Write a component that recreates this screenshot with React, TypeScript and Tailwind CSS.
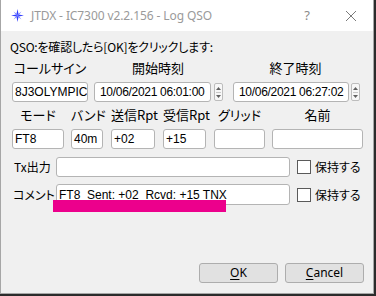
import React from 'react';

const jp = "font-['Noto_Sans_CJK_JP','Noto_Sans',sans-serif] [font-feature-settings:'palt']";

const Field = ({ w, value, className = '' }: { w: string; value?: string; className?: string }) => (
  <div
    className={`${w} h-[20px] shrink-0 bg-white border border-[#b4b4b4] rounded-[3px] flex items-center px-[2px] whitespace-pre overflow-hidden text-[12px] leading-none text-black font-['Liberation_Sans',sans-serif] ${className}`}
  >
    {value}
  </div>
);

const Spinner = ({ className = '' }: { className?: string }) => (
  <div className={`w-[9px] h-[18px] shrink-0 bg-[#f7f7f7] border border-[#bdbdbd] rounded-[2px] flex flex-col items-center justify-center gap-[2px] ${className}`}>
    <svg width="5" height="3" viewBox="0 0 5 3">
      <path d="M0 3 L2.5 0 L5 3 Z" fill="#606060" />
    </svg>
    <div className="w-[5px] h-px bg-[#c8c8c8]" />
    <svg width="5" height="3" viewBox="0 0 5 3">
      <path d="M0 0 L2.5 3 L5 0 Z" fill="#606060" />
    </svg>
  </div>
);

const Label = ({ w, text, className = '' }: { w: string; text: string; className?: string }) => (
  <div className={`${w} shrink-0 text-center whitespace-nowrap text-[13px] leading-[16px] ${className}`}>{text}</div>
);

const Check = () => (
  <div className="w-[14px] h-[14px] shrink-0 bg-white border border-[#5a5a5a] ml-[7px]" />
);

export default function App() {
  return (
    <div className="w-[376px] h-[296px] bg-[#2b2b2b] overflow-hidden">
      <div className={`w-[374px] h-[294px] bg-[#f0f0f0] border border-[#a6a6a6] border-t-0 flex flex-col text-black ${jp}`}>
        {/* title bar */}
        <div className="h-[31px] bg-white flex items-center shrink-0">
          <svg className="ml-[10px]" width="13" height="13" viewBox="0 0 13 13">
            <path d="M6.5 0 L7.6 5.4 L13 6.5 L7.6 7.6 L6.5 13 L5.4 7.6 L0 6.5 L5.4 5.4 Z" fill="#2f3cff" />
            <path d="M2.5 2.5 L6.5 5.6 L10.5 2.5 L7.4 6.5 L10.5 10.5 L6.5 7.4 L2.5 10.5 L5.6 6.5 Z" fill="#6f78ff" />
          </svg>
          <span className="ml-[7px] text-[12px] text-[#9a9a9a] font-['Noto_Sans',sans-serif] tracking-[-0.1px]">
            JTDX - IC7300 v2.2.156 - Log QSO
          </span>
          <span className="ml-auto mr-[35px] text-[13px] text-[#8a8a8a] font-['Noto_Sans',sans-serif]">?</span>
          <svg className="mr-[16px]" width="12" height="12" viewBox="0 0 12 12">
            <path d="M1 1 L11 11 M11 1 L1 11" stroke="#7a7a7a" strokeWidth="1" />
          </svg>
        </div>

        {/* body */}
        <div className="relative flex-1 flex flex-col pl-[11px]">
          <div className="mt-[8px] text-[12px] leading-[16px] -ml-[2px] tracking-[-0.2px]">QSO:を確認したら[OK]をクリックします:</div>

          <div className="mt-[5px] flex">
            <Label w="w-[76px]" text="コールサイン" />
            <Label w="w-[128px]" text="開始時刻" className="ml-[6px]" />
            <Label w="w-[127px]" text="終了時刻" className="ml-[10px]" />
          </div>
          <div className="mt-[6px] flex items-center">
            <Field w="w-[76px]" value="8J3OLYMPIC" className="text-[11px]" />
            <Field w="w-[117px]" value="10/06/2021 06:01:00" className="ml-[6px] pl-[5px] text-[11px] tracking-[-0.3px]" />
            <Spinner className="ml-[3px]" />
            <Field w="w-[116px]" value="10/06/2021 06:27:02" className="ml-[10px] pl-[5px] text-[11px] tracking-[-0.3px]" />
            <Spinner className="ml-[2px]" />
          </div>

          <div className="mt-[5px] flex">
            <Label w="w-[52px]" text="モード" />
            <Label w="w-[32px]" text="バンド" className="ml-[7px]" />
            <Label w="w-[44px]" text="送信Rpt" className="ml-[8px]" />
            <Label w="w-[43px]" text="受信Rpt" className="ml-[8px]" />
            <Label w="w-[51px]" text="グリッド" className="ml-[8px]" />
            <Label w="w-[91px]" text="名前" className="ml-[7px]" />
          </div>
          <div className="mt-[6px] flex">
            <Field w="w-[52px]" value="FT8" />
            <Field w="w-[32px]" value="40m" className="ml-[7px]" />
            <Field w="w-[44px]" value="+02" className="ml-[8px]" />
            <Field w="w-[43px]" value="+15" className="ml-[8px]" />
            <Field w="w-[51px]" className="ml-[8px]" />
            <Field w="w-[91px]" className="ml-[7px]" />
          </div>

          <div className="mt-[8px] flex items-center">
            <div className="w-[44px] text-[12px] leading-[16px] pl-[2px]">Tx出力</div>
            <Field w="w-[234px]" />
            <Check />
            <span className="ml-[4px] text-[12px] leading-[16px]">保持する</span>
          </div>
          <div className="mt-[7px] flex items-center">
            <div className="w-[44px] text-[12px] leading-[16px] pl-[1px]">コメント</div>
            <Field w="w-[234px]" value="FT8  Sent: +02  Rcvd: +15 TNX" className="h-[21px] text-[11px]" />
            <Check />
            <span className="ml-[4px] text-[12px] leading-[16px]">保持する</span>
          </div>

          {/* highlight annotation */}
          <div className="absolute left-[52px] top-[169px] w-[173px] h-[12px] bg-[#ec008c]" />

          <div className="mt-auto mb-[10px] mr-[9px] flex justify-end gap-[7px]">
            <button className="w-[79px] h-[20px] bg-[#e1e1e1] border border-[#adadad] rounded-[3px] text-[12px] leading-none font-['Noto_Sans',sans-serif]">
              <span className="underline underline-offset-2">O</span>K
            </button>
            <button className="w-[79px] h-[20px] bg-[#e1e1e1] border border-[#adadad] rounded-[3px] text-[12px] leading-none font-['Noto_Sans',sans-serif]">
              <span className="underline underline-offset-2">C</span>ancel
            </button>
          </div>
        </div>
      </div>
    </div>
  );
}
